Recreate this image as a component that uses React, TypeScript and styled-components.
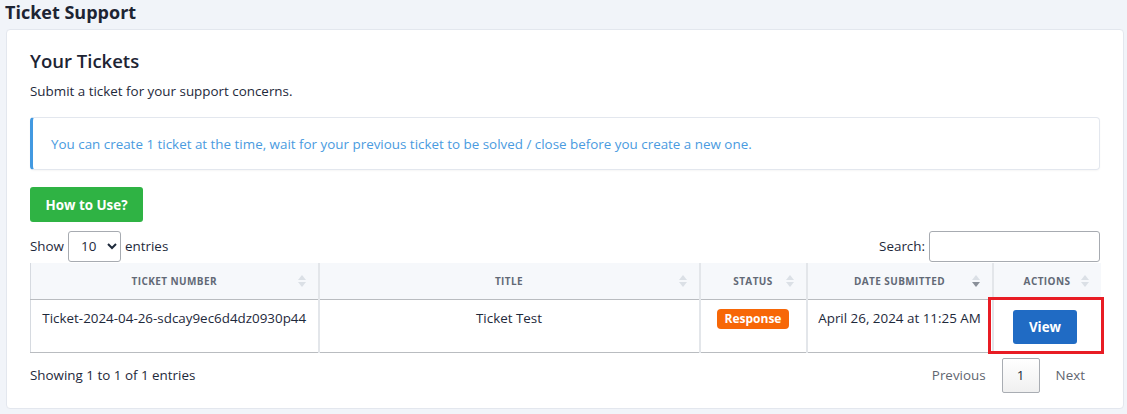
import React from "react";
import styled, { createGlobalStyle } from "styled-components";

const Global = createGlobalStyle`
  html, body { margin: 0; padding: 0; }
  body {
    background: #f1f4f9;
    font-family: "Open Sans", "Noto Sans", sans-serif;
    color: #1e293b;
    width: 1127px;
    height: 414px;
    overflow: hidden;
  }
`;

const Page = styled.div`
  padding: 0 3px 0 6px;
`;

const PageTitle = styled.h1`
  margin: 0 0 0 -1px;
  height: 29px;
  font-size: 18px;
  font-weight: 700;
  line-height: 24px;
  color: #1d2433;
`;

const Card = styled.div`
  background: #fff;
  border: 1px solid #e3e7ee;
  border-radius: 4px;
  padding: 16px 23px 15px 23px;
`;

const Heading = styled.h2`
  margin: 0;
  font-size: 18.5px;
  font-weight: 600;
  line-height: 30px;
  color: #1d2433;
`;

const Sub = styled.p`
  margin: 6px 0 0;
  font-size: 13.4px;
  line-height: 18px;
  color: #1e293b;
`;

const Alert = styled.div`
  margin-top: 17px;
  height: 53px;
  box-sizing: border-box;
  display: flex;
  align-items: center;
  padding: 0 18px;
  border: 1px solid #e3e7ee;
  border-left: 3px solid #4299e1;
  border-radius: 4px;
  color: #4a9be0;
  font-size: 13.4px;
  box-shadow: 0 1px 2px rgba(0, 0, 0, 0.04);
`;

const GreenButton = styled.button`
  margin-top: 17px;
  height: 35px;
  width: 113px;
  border: none;
  border-radius: 3px;
  background: #2fb344;
  color: #fff;
  font-family: inherit;
  font-size: 13.4px;
  font-weight: 700;
  display: block;
`;

const Controls = styled.div`
  margin-top: 8px;
  display: flex;
  justify-content: space-between;
  align-items: center;
  font-size: 13.4px;
  height: 32px;
`;

const Label = styled.label`
  display: flex;
  align-items: center;
  gap: 4px;
`;

const Select = styled.select`
  width: 53px;
  height: 31px;
  border: 1px solid #a7abb1;
  border-radius: 3px;
  background: #fff;
  font-family: inherit;
  font-size: 13.4px;
  padding: 0 0 0 8px;
  color: #1e293b;
`;

const Input = styled.input`
  width: 171px;
  height: 31px;
  box-sizing: border-box;
  border: 1px solid #a7abb1;
  border-radius: 3px;
  margin: 0;
`;

const Table = styled.table`
  width: 100%;
  border-collapse: collapse;
  margin-top: 1px;
  table-layout: fixed;
  border-left: 1px solid #d6dae0;
`;

const Th = styled.th<{ $w: number }>`
  width: ${(p) => p.$w}px;
  height: 36px;
  box-sizing: border-box;
  background: #f6f8fb;
  font-size: 10px;
  font-weight: 700;
  letter-spacing: 0.04em;
  color: #626976;
  text-transform: uppercase;
  text-align: center;
  position: relative;
  padding: 0 20px;
  border-right: 2px solid #e3e6ea;
  border-bottom: 1px solid #b9bcc0;
  &:last-child { border-right: none; }
`;

const Sort = styled.span`
  position: absolute;
  right: 12px;
  top: 50%;
  transform: translateY(-50%);
  display: flex;
  flex-direction: column;
  gap: 2px;
`;

const Tri = styled.span<{ $down?: boolean; $dark?: boolean }>`
  width: 0;
  height: 0;
  border-left: 4px solid transparent;
  border-right: 4px solid transparent;
  ${(p) =>
    p.$down
      ? `border-top: 5px solid ${p.$dark ? "#8a9099" : "#dbe0e6"};`
      : `border-bottom: 5px solid ${p.$dark ? "#8a9099" : "#dbe0e6"};`}
`;

const Td = styled.td`
  height: 53px;
  box-sizing: border-box;
  vertical-align: top;
  text-align: center;
  padding: 9px 8px 0;
  font-size: 13.4px;
  color: #1e293b;
  border-right: 2px solid #e3e6ea;
  border-bottom: 1px solid #b9bcc0;
  position: relative;
  &:last-child { border-right: none; }
`;

const Badge = styled.span`
  display: inline-block;
  background: #f76707;
  color: #fff;
  font-size: 12px;
  font-weight: 700;
  line-height: 20px;
  padding: 0 8px;
  border-radius: 4px;
  margin-top: 0;
`;

const ViewButton = styled.button`
  width: 64px;
  height: 34px;
  border: none;
  border-radius: 3px;
  background: #206bc4;
  color: #fff;
  font-family: inherit;
  font-size: 13.4px;
  font-weight: 700;
  margin-top: 1px;
  margin-left: -4px;
`;

const Highlight = styled.span`
  position: absolute;
  left: -6px;
  right: -3px;
  top: -3px;
  bottom: -2px;
  border: 3px solid #e81c24;
  pointer-events: none;
`;

const Footer = styled.div`
  display: flex;
  justify-content: space-between;
  align-items: center;
  font-size: 13.4px;
  margin-top: 5px;
  height: 35px;
`;

const Pager = styled.div`
  display: flex;
  align-items: center;
  gap: 16px;
  margin-right: 15px;
  color: #5f6670;
`;

const PageNum = styled.span`
  width: 38px;
  height: 35px;
  box-sizing: border-box;
  border: 1px solid #a9adb3;
  border-radius: 2px;
  background: linear-gradient(#fff, #f0f0f0);
  display: flex;
  align-items: center;
  justify-content: center;
  color: #1e293b;
`;

const cols = [
  { label: "Ticket Number", w: 288 },
  { label: "Title", w: 381 },
  { label: "Status", w: 107 },
  { label: "Date Submitted", w: 186, sorted: true },
  { label: "Actions", w: 108 },
];

export default function App() {
  return (
    <>
      <Global />
      <Page>
        <PageTitle>Ticket Support</PageTitle>
        <Card>
          <Heading>Your Tickets</Heading>
          <Sub>Submit a ticket for your support concerns.</Sub>
          <Alert>
            You can create 1 ticket at the time, wait for your previous ticket to be solved / close before you create a new one.
          </Alert>
          <GreenButton>How to Use?</GreenButton>
          <Controls>
            <Label>
              Show
              <Select defaultValue="10">
                <option>10</option>
                <option>25</option>
              </Select>
              entries
            </Label>
            <Label>
              Search:
              <Input type="text" />
            </Label>
          </Controls>
          <Table>
            <thead>
              <tr>
                {cols.map((c) => (
                  <Th key={c.label} $w={c.w}>
                    {c.label}
                    <Sort>
                      <Tri />
                      <Tri $down $dark={c.sorted} />
                    </Sort>
                  </Th>
                ))}
              </tr>
            </thead>
            <tbody>
              <tr>
                <Td>Ticket-2024-04-26-sdcay9ec6d4dz0930p44</Td>
                <Td>Ticket Test</Td>
                <Td>
                  <Badge>Response</Badge>
                </Td>
                <Td>April 26, 2024 at 11:25 AM</Td>
                <Td>
                  <ViewButton>View</ViewButton>
                  <Highlight />
                </Td>
              </tr>
            </tbody>
          </Table>
          <Footer>
            <span>Showing 1 to 1 of 1 entries</span>
            <Pager>
              <span>Previous</span>
              <PageNum>1</PageNum>
              <span>Next</span>
            </Pager>
          </Footer>
        </Card>
      </Page>
    </>
  );
}
